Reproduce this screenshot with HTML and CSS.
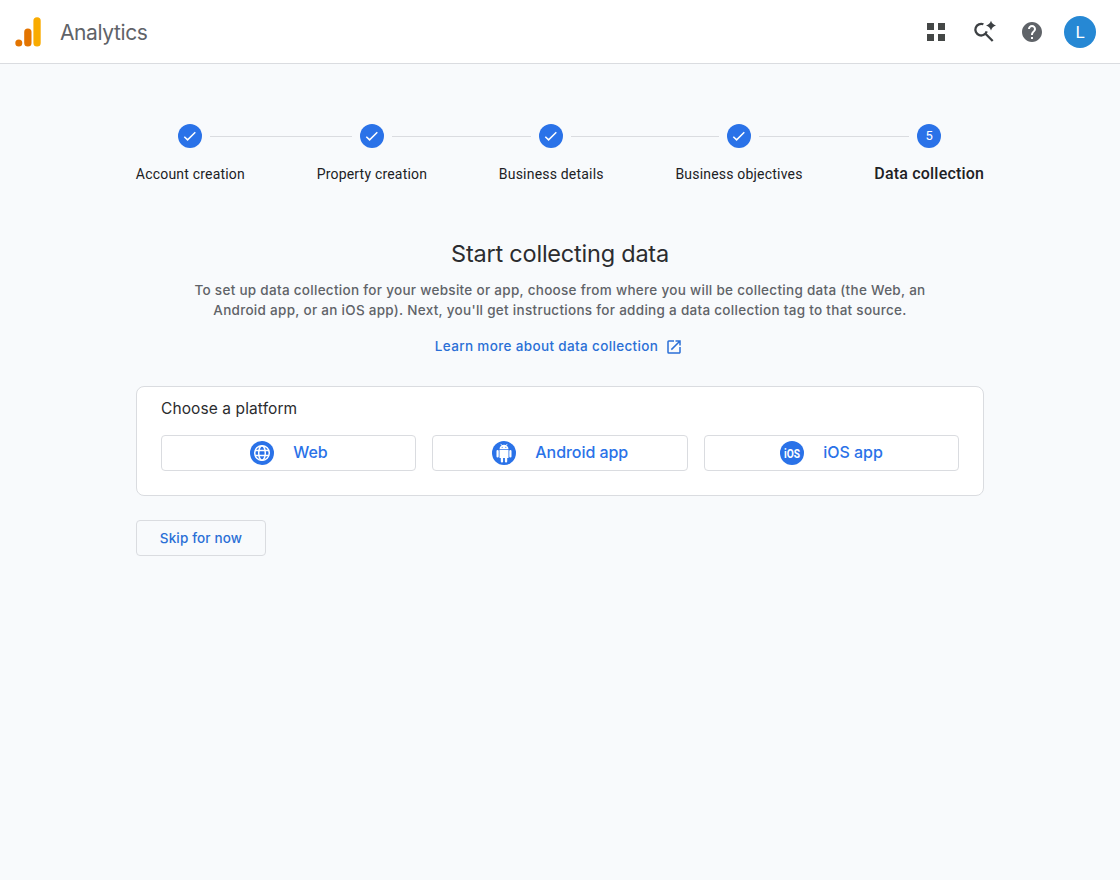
FILE: index.html
```html
<!DOCTYPE html>
<html lang="en">
<head>
    <meta charset="UTF-8">
    <meta name="viewport" content="width=device-width, initial-scale=1.0">
    <title>Analytics</title>
    <link rel="stylesheet" href="styles.css">
</head>
<body>
    <header class="header">
        <svg class="logo" viewBox="0 0 28 32">
            <rect x="18.4" y="1.2" width="7.3" height="29.4" rx="3.6" fill="#f9ab00"/>
            <rect x="9.2" y="12.4" width="7.3" height="18.2" rx="3.6" fill="#e37400"/>
            <circle cx="3.8" cy="27.1" r="3.5" fill="#e37400"/>
        </svg>
        <span class="product">Analytics</span>
        <nav class="actions">
            <svg class="icon" viewBox="0 0 24 24" fill="#444746">
                <path d="M3 3h7v7H3zM14 3h7v7h-7zM3 14h7v7H3zM14 14h7v7h-7z"/>
            </svg>
            <svg class="icon" viewBox="0 0 24 24">
                <path d="M11.4 4.300A5.800 5.800 0 1 0 14.700 11.400M13 13.200L20.700 21" fill="none" stroke="#3c4043" stroke-width="2.300"/>
                <path d="M19 .8q1.200 3.600 5 4.800-3.800 1.200-5 4.800-1.200-3.600-5-4.800 3.800-1.200 5-4.800z" fill="#3c4043"/>
            </svg>
            <svg class="icon" viewBox="0 0 24 24" fill="#5f6368">
                <path d="M12 2C6.480 2 2 6.480 2 12s4.480 10 10 10 10-4.480 10-10S17.520 2 12 2zm1 17h-2v-2h2v2zm2.070-7.750l-.9.920C13.450 12.900 13 13.500 13 15h-2v-.5c0-1.100.450-2.100 1.170-2.830l1.240-1.260c.370-.360.590-.860.590-1.410 0-1.100-.9-2-2-2s-2 .9-2 2H8c0-2.210 1.790-4 4-4s4 1.790 4 4c0 .880-.360 1.680-.930 2.250z"/>
            </svg>
            <span class="avatar">L</span>
        </nav>
    </header>

    <main class="content">
        <div class="stepper">
            <div class="step">
                <div class="track">
                    <span class="dot"><svg viewBox="0 0 24 24"><path d="M6.300 12.700l3.300 3.200 7.700-7.700"/></svg></span>
                </div>
                <span class="label">Account creation</span>
            </div>
            <div class="step">
                <div class="track">
                    <span class="dot"><svg viewBox="0 0 24 24"><path d="M6.300 12.700l3.300 3.200 7.700-7.700"/></svg></span>
                </div>
                <span class="label">Property creation</span>
            </div>
            <div class="step">
                <div class="track">
                    <span class="dot"><svg viewBox="0 0 24 24"><path d="M6.300 12.700l3.300 3.200 7.700-7.700"/></svg></span>
                </div>
                <span class="label">Business details</span>
            </div>
            <div class="step">
                <div class="track">
                    <span class="dot"><svg viewBox="0 0 24 24"><path d="M6.300 12.700l3.300 3.200 7.700-7.700"/></svg></span>
                </div>
                <span class="label">Business objectives</span>
            </div>
            <div class="step active">
                <div class="track">
                    <span class="dot">5</span>
                </div>
                <span class="label">Data collection</span>
            </div>
        </div>

        <h1>Start collecting data</h1>
        <p class="intro">
            To set up data collection for your website or app, choose from where you will be collecting data (the Web, an<br>
            Android app, or an iOS app). Next, you'll get instructions for adding a data collection tag to that source.
        </p>
        <a class="learn-more">
            <span>Learn more about data collection</span>
            <svg viewBox="0 0 24 24" fill="#2a6fd6">
                <path d="M19 19H5V5h7V3H5a2 2 0 0 0-2 2v14a2 2 0 0 0 2 2h14c1.100 0 2-.9 2-2v-7h-2v7zM14 3v2h3.590l-9.830 9.830 1.410 1.410L19 6.410V10h2V3h-7z"/>
            </svg>
        </a>

        <section class="card">
            <h2>Choose a platform</h2>
            <div class="platforms">
                <button class="platform">
                    <svg viewBox="0 0 24 24">
                        <circle cx="12" cy="12" r="12" fill="#2a72e8"/>
                        <g fill="none" stroke="#fff" stroke-width="1.5">
                            <circle cx="12" cy="12" r="7.300"/>
                            <ellipse cx="12" cy="12" rx="3.300" ry="7.300"/>
                            <path d="M5.300 9.600h13.400M5.300 14.400h13.400"/>
                        </g>
                    </svg>
                    <span class="name">Web</span>
                </button>
                <button class="platform">
                    <svg viewBox="0 0 24 24">
                        <circle cx="12" cy="12" r="12" fill="#2a72e8"/>
                        <g fill="#fff">
                            <path d="M7.500 8.200a4.500 4.500 0 0 1 9 0z"/>
                            <path d="M7.500 9h9v8h-9z"/>
                            <rect x="4.500" y="9" width="2.200" height="7.500" rx="1.100"/>
                            <rect x="17.300" y="9" width="2.200" height="7.500" rx="1.100"/>
                            <rect x="8.800" y="15" width="2.300" height="6.500" rx="1.100"/>
                            <rect x="12.900" y="15" width="2.300" height="6.500" rx="1.100"/>
                        </g>
                        <path d="M8.700 2.900l1.400 1.800M15.300 2.900l-1.400 1.800" stroke="#fff" stroke-width=".8"/>
                        <circle cx="10.200" cy="6.300" r=".55" fill="#2a72e8"/>
                        <circle cx="13.800" cy="6.300" r=".55" fill="#2a72e8"/>
                    </svg>
                    <span class="name">Android app</span>
                </button>
                <button class="platform">
                    <svg viewBox="0 0 24 24">
                        <circle cx="12" cy="12" r="12" fill="#2a72e8"/>
                        <text class="ios-mark" x="12" y="17" textLength="16" lengthAdjust="spacingAndGlyphs">iOS</text>
                    </svg>
                    <span class="name">iOS app</span>
                </button>
            </div>
        </section>

        <button class="skip">Skip for now</button>
    </main>
</body>
</html>
```
FILE: styles.css
```css
* {
    box-sizing: border-box;
}

body {
    margin: 0;
    min-height: 100vh;
    background-color: #f8fafc;
    font-family: Inter, "Liberation Sans", sans-serif;
    color: #2b2c2f;
}

.header {
    display: flex;
    align-items: center;
    height: 64px;
    padding: 0 24px 0 15px;
    background-color: #fff;
    border-bottom: 1px solid #dadce0;
}

.logo {
    width: 28px;
    height: 32px;
}

.product {
    margin-left: 17px;
    padding-top: 2px;
    font-size: 21px;
    letter-spacing: -0.4px;
    color: #5f6368;
}

.actions {
    display: flex;
    align-items: center;
    gap: 24px;
    margin-left: auto;
}

.icon {
    width: 24px;
    height: 24px;
}

.avatar {
    display: flex;
    align-items: center;
    justify-content: center;
    width: 32px;
    height: 32px;
    margin-left: -4px;
    border-radius: 50%;
    background-color: #2688d4;
    color: #fff;
    font: 17px Roboto, sans-serif;
}

.content {
    width: 848px;
    margin: 0 auto;
    padding-top: 60px;
}

.stepper {
    display: flex;
    margin: 0 -36px;
    font-family: Roboto, sans-serif;
    color: #202124;
}

.step {
    display: flex;
    flex: 1 1 auto;
    flex-direction: column;
    align-items: center;
}

.track {
    display: flex;
    align-items: center;
    gap: 8px;
    width: 100%;
}

.track::before,
.track::after {
    content: "";
    flex: 1;
    height: 1px;
    background-color: #dadce0;
}

.step:first-child .track::before,
.step:last-child .track::after {
    visibility: hidden;
}

.dot {
    display: flex;
    align-items: center;
    justify-content: center;
    width: 24px;
    height: 24px;
    border-radius: 50%;
    background-color: #2a72e8;
    color: #fff;
    font-size: 13px;
    line-height: 14px;
}

.dot svg {
    width: 24px;
    height: 24px;
    fill: none;
    stroke: #fff;
    stroke-width: 1.5;
}

.label {
    margin-top: 16px;
    padding: 0 35.500px;
    font-size: 14px;
    line-height: 20px;
    letter-spacing: 0.2px;
    white-space: nowrap;
}

.active .label {
    font-size: 16px;
    font-weight: 500;
}

h1 {
    margin: 54px 0 0;
    font-size: 23.500px;
    font-weight: 400;
    line-height: 32px;
    letter-spacing: -0.22px;
    text-align: center;
}

.intro {
    margin: 10px 0 0;
    font-size: 13.500px;
    font-weight: 500;
    line-height: 20px;
    letter-spacing: 0.29px;
    text-align: center;
    white-space: nowrap;
    color: #5f6368;
}

.learn-more {
    display: flex;
    align-items: center;
    gap: 7px;
    width: fit-content;
    height: 20px;
    margin: 16px auto 0;
    padding-right: 2px;
    font-size: 13.500px;
    font-weight: 500;
    letter-spacing: 0.35px;
    color: #2a6fd6;
}

.learn-more svg {
    width: 18px;
    height: 18px;
    margin-top: 2px;
}

.card {
    height: 110px;
    margin-top: 30px;
    padding: 10px 24px;
    background-color: #fff;
    border: 1px solid #dadce0;
    border-radius: 8px;
}

h2 {
    margin: 0;
    font-size: 15.500px;
    font-weight: 400;
    line-height: 24px;
    letter-spacing: 0.1px;
}

.platforms {
    display: grid;
    grid-template-columns: repeat(3, 1fr);
    gap: 16px;
    margin-top: 14px;
}

.platform {
    display: flex;
    align-items: center;
    justify-content: center;
    gap: 19.500px;
    height: 36px;
    padding: 0;
    background-color: #fff;
    border: 1px solid #dadce0;
    border-radius: 4px;
    font-family: inherit;
    font-size: 16px;
    font-weight: 500;
    color: #2a72e8;
}

.platform svg {
    width: 24px;
    height: 24px;
}

.platform .name {
    padding-bottom: 2px;
    letter-spacing: -0.05px;
}

.ios-mark {
    fill: #fff;
    font: bold 13px Roboto, sans-serif;
    text-anchor: middle;
}

.skip {
    width: 130px;
    height: 36px;
    margin-top: 24px;
    padding: 0;
    background-color: transparent;
    border: 1px solid #dadce0;
    border-radius: 4px;
    font-family: inherit;
    font-size: 13.500px;
    font-weight: 500;
    letter-spacing: 0.15px;
    color: #2a6fd6;
}
```
